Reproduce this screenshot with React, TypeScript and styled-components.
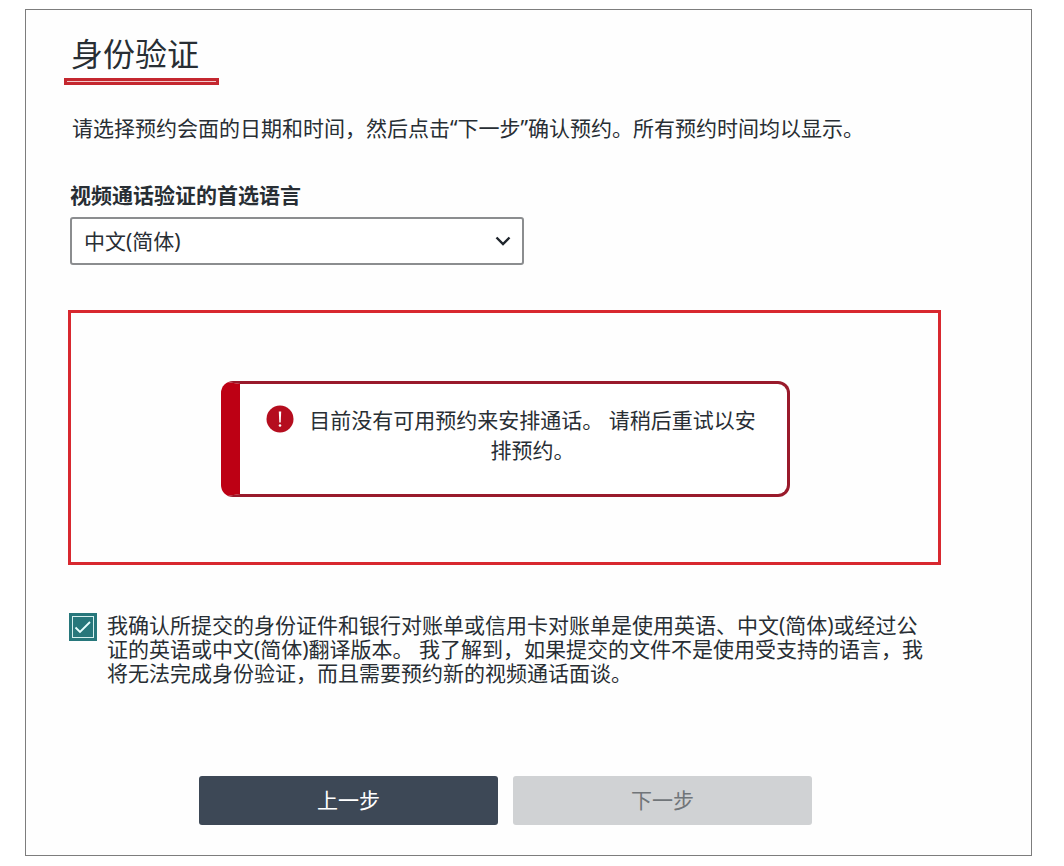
import React, { useState } from "react";
import styled, { createGlobalStyle } from "styled-components";

const GlobalStyle = createGlobalStyle`
  *, *::before, *::after { box-sizing: border-box; }
  body {
    margin: 0;
    background: #fff;
    color: #282e34;
    font-family: "Noto Sans", "Noto Sans CJK SC", sans-serif;
    font-size: 21px;
    line-height: 24px;
  }
  button, select { font: inherit; }
`;

const Page = styled.main`
  margin: 9px 32px 10px 25px;
  padding: 24px 90px 30px 38px;
  border: 1px solid #7d7d7d;
  background: #fefefe;
`;

const Header = styled.header`
  width: fit-content;
`;

const Title = styled.h1`
  margin: 0 0 4px;
  padding: 0 20px 0 7px;
  font-size: 32px;
  font-weight: 400;
  line-height: 40px;
`;

const Underline = styled.div`
  height: 7px;
  border: 3px solid #c4272f;
  background: #f3c9cb;
`;

const Form = styled.form`
  display: flex;
  flex-direction: column;
  padding-left: 4px;
`;

const Intro = styled.p`
  margin: 28px 0 40px;
  padding-left: 4px;
  line-height: 30px;
`;

const Field = styled.div`
  display: flex;
  flex-direction: column;
  gap: 10px;
  max-width: 456px;
  margin-bottom: 45px;
  padding-left: 2px;
`;

const FieldLabel = styled.label`
  font-weight: 700;
`;

const SelectBox = styled.div`
  display: grid;
  align-items: center;
  > * { grid-area: 1 / 1; }
`;

const Select = styled.select`
  appearance: none;
  width: 100%;
  height: 48px;
  padding: 0 44px 0 12px;
  border: 2px solid #8b8d8f;
  border-radius: 3px;
  background: #fff;
  color: inherit;
`;

const Chevron = styled.svg`
  justify-self: end;
  width: 16px;
  height: 10px;
  margin-right: 13px;
  pointer-events: none;
`;

const Panel = styled.section`
  display: flex;
  justify-content: center;
  padding: 68px 24px 65px 26px;
  border: 3px solid #d8282f;
`;

const Alert = styled.div`
  display: flex;
  gap: 12px;
  width: 100%;
  max-width: 569px;
  min-height: 116px;
  border: 3px solid #991a2b;
  border-left: 19px solid #bd0014;
  border-radius: 12px;
  padding: 21px 28px 28px 26px;
  background: #fff;
`;

const AlertIcon = styled.svg`
  flex: none;
  width: 28px;
  height: 28px;
`;

const AlertText = styled.p`
  flex: 1;
  margin: 0;
  line-height: 30px;
  text-align: center;
`;

const Consent = styled.div`
  display: flex;
  align-items: flex-start;
  gap: 10px;
  margin: 48px 8px 91px 1px;
`;

const CheckWrap = styled.span`
  display: grid;
  flex: none;
  > * { grid-area: 1 / 1; }
`;

const Checkbox = styled.input`
  appearance: none;
  width: 28px;
  height: 28px;
  margin: 0;
  border: 3px solid #27777b;
  background: #fff;
  &:checked { background: #27777b; }
`;

const CheckMark = styled.svg`
  width: 28px;
  height: 28px;
  pointer-events: none;
`;

const ConsentText = styled.label`
  flex: 1;
`;

const Actions = styled.div`
  display: flex;
  justify-content: center;
  gap: 15px;
  padding-left: 2px;
`;

const Button = styled.button<{ $primary?: boolean }>`
  flex: 0 1 299px;
  height: 49px;
  padding: 0 0 2px;
  border: 0;
  border-radius: 3px;
  background: ${(p) => (p.$primary ? "#3d4856" : "#d0d2d4")};
  color: ${(p) => (p.$primary ? "#fff" : "#707579")};
`;

export default function App() {
  const [confirmed, setConfirmed] = useState(true);

  return (
    <>
      <GlobalStyle />
      <Page>
        <Header>
          <Title>身份验证</Title>
          <Underline />
        </Header>
        <Form onSubmit={(e) => e.preventDefault()}>
          <Intro>
            请选择预约会面的日期和时间，然后点击“下一步”确认预约。所有预约时间均以显示。
          </Intro>
          <Field>
            <FieldLabel htmlFor="language">视频通话验证的首选语言</FieldLabel>
            <SelectBox>
              <Select id="language" defaultValue="zh">
                <option value="zh">中文(简体)</option>
              </Select>
              <Chevron viewBox="0 0 16 10" aria-hidden="true">
                <path d="M1.5 1.5 8 8l6.500-6.500" fill="none" stroke="#20262d" strokeWidth="2.400" />
              </Chevron>
            </SelectBox>
          </Field>
          <Panel>
            <Alert role="alert">
              <AlertIcon viewBox="0 0 28 28" aria-hidden="true">
                <circle cx="14" cy="14" r="13.500" fill="#b50d1e" />
                <path d="M12.800 6.500h2.400l-.5 11h-1.400z" fill="#fff" />
                <circle cx="14" cy="20.500" r="1.300" fill="#fff" />
              </AlertIcon>
              <AlertText>目前没有可用预约来安排通话。 请稍后重试以安排预约。</AlertText>
            </Alert>
          </Panel>
          <Consent>
            <CheckWrap>
              <Checkbox
                id="consent"
                type="checkbox"
                checked={confirmed}
                onChange={(e) => setConfirmed(e.target.checked)}
              />
              {confirmed && (
                <CheckMark viewBox="0 0 28 28" aria-hidden="true">
                  <rect x="3.500" y="3.500" width="21" height="21" fill="none" stroke="#d5f0ef" />
                  <path d="m6.500 14.500 4.500 4.500L21 9" fill="none" stroke="#e8ffff" strokeWidth="1.800" />
                </CheckMark>
              )}
            </CheckWrap>
            <ConsentText htmlFor="consent">
              我确认所提交的身份证件和银行对账单或信用卡对账单是使用英语、中文(简体)或经过公证的英语或中文(简体)翻译版本。 我了解到，如果提交的文件不是使用受支持的语言，我将无法完成身份验证，而且需要预约新的视频通话面谈。
            </ConsentText>
          </Consent>
          <Actions>
            <Button type="button" $primary>上一步</Button>
            <Button type="submit" disabled>下一步</Button>
          </Actions>
        </Form>
      </Page>
    </>
  );
}
